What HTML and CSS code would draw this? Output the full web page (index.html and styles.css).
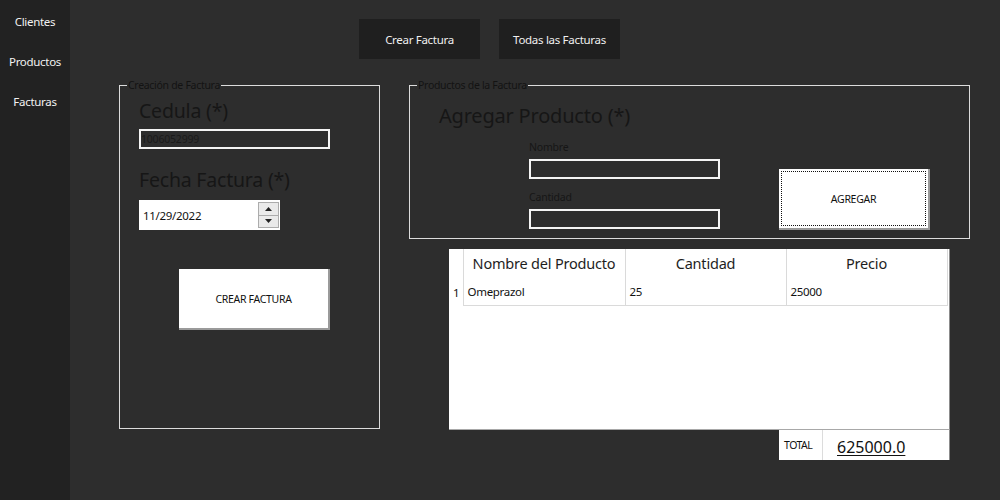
FILE: index.html
```html
<!DOCTYPE html>
<html lang="es">
<head>
<meta charset="utf-8">
<title>Facturas</title>
<link rel="stylesheet" href="styles.css">
</head>
<body>
<nav class="sidebar">
  <div class="nav-item">Clientes</div>
  <div class="nav-item">Productos</div>
  <div class="nav-item">Facturas</div>
</nav>
<main class="main">
  <div class="topbar">
    <button class="top-btn">Crear Factura</button>
    <button class="top-btn">Todas las Facturas</button>
  </div>
  <div class="content">
    <fieldset class="group group-left">
      <legend>Creación de Factura</legend>
      <div class="group-body left-body">
        <div class="big-label first">Cedula (*)</div>
        <div class="text-input cedula">1006052999</div>
        <div class="big-label second">Fecha Factura (*)</div>
        <div class="date-input">
          <span class="date-value">11/29/2022</span>
          <span class="spinner">
            <span class="spin up"><svg width="7" height="4" viewBox="0 0 7 4"><path d="M0 4 L3.5 0 L7 4 Z" fill="#222"/></svg></span>
            <span class="spin down"><svg width="7" height="4" viewBox="0 0 7 4"><path d="M0 0 L3.5 4 L7 0 Z" fill="#222"/></svg></span>
          </span>
        </div>
        <button class="white-btn crear">CREAR FACTURA</button>
      </div>
    </fieldset>
    <div class="right-col">
      <fieldset class="group group-right">
        <legend>Productos de la Factura</legend>
        <div class="group-body right-body">
          <div class="big-label agregar-title">Agregar Producto (*)</div>
          <div class="add-row">
            <div class="fields">
              <div class="small-label">Nombre</div>
              <div class="text-input field"></div>
              <div class="small-label second-label">Cantidad</div>
              <div class="text-input field"></div>
            </div>
            <button class="white-btn agregar"><span class="focus-ring">AGREGAR</span></button>
          </div>
        </div>
      </fieldset>
      <div class="grid-box">
        <table class="grid">
          <thead>
            <tr>
              <th class="rh"></th>
              <th class="c1">Nombre del Producto</th>
              <th class="c2">Cantidad</th>
              <th class="c3">Precio</th>
            </tr>
          </thead>
          <tbody>
            <tr>
              <td class="rh">1</td>
              <td>Omeprazol</td>
              <td>25</td>
              <td>25000</td>
            </tr>
          </tbody>
        </table>
      </div>
      <div class="total-box">
        <span class="total-label">TOTAL</span>
        <span class="total-value">625000.0</span>
      </div>
    </div>
  </div>
</main>
</body>
</html>
```

FILE: styles.css
```css
* { box-sizing: border-box; }
html, body { margin: 0; padding: 0; }
body {
  display: flex;
  width: 1000px;
  height: 500px;
  overflow: hidden;
  font-family: "Noto Sans", "Open Sans", sans-serif;
  background: #2d2d2d;
}
.sidebar {
  width: 70px;
  background: #222222;
  padding-top: 2px;
  flex-shrink: 0;
}
.nav-item {
  height: 40px;
  line-height: 40px;
  text-align: center;
  color: #f2f2f2;
  font-size: 11.5px;
  letter-spacing: -0.3px;
}
.main {
  flex: 1;
  background: #2d2d2d;
  padding-top: 19px;
}
.topbar {
  display: flex;
  gap: 19px;
  padding-left: 289px;
}
.top-btn {
  width: 121px;
  height: 40px;
  border: none;
  background: #1f1f1f;
  color: #f0f0f0;
  font-family: inherit;
  font-size: 11.5px;
  letter-spacing: -0.3px;
  padding: 0;
}
.content {
  display: flex;
  gap: 29px;
  padding-left: 49px;
  margin-top: 20px;
}
.group {
  margin: 0;
  padding: 0;
  border: 1px solid #dcdcdc;
  min-width: 0;
}
.group legend {
  margin-left: 7px;
  padding: 0 1px;
  color: #131313;
  font-size: 10.5px;
  line-height: 12px;
  letter-spacing: -0.3px;
}
.group-left {
  width: 261px;
  height: 350px;
}
.left-body { padding-left: 19px; }
.big-label {
  color: #161616;
  font-size: 19.5px;
  line-height: 24px;
  letter-spacing: -0.2px;
}
.big-label.first { margin-top: 8px; }
.big-label.second { margin-top: 19px; }
.text-input {
  border: 2px solid #f4f4f4;
  background: #2d2d2d;
  height: 20px;
  color: #1a1a1a;
  font-size: 10.5px;
  line-height: 16px;
  padding-left: 0;
  letter-spacing: -0.2px;
}
.cedula {
  width: 191px;
  margin-top: 6px;
}
.date-input {
  margin-top: 8px;
  width: 141px;
  height: 30px;
  background: #ffffff;
  display: flex;
  align-items: center;
  justify-content: space-between;
  padding: 0 1px 0 4px;
}
.date-value {
  font-size: 11.5px;
  color: #111;
  letter-spacing: -0.3px;
}
.spinner {
  display: flex;
  flex-direction: column;
  width: 21px;
  height: 26px;
}
.spin {
  flex: 1;
  display: flex;
  align-items: center;
  justify-content: center;
  background: #eaeaea;
  border: 1px solid #acacac;
}
.spin.down { border-top: none; }
.white-btn {
  background: #ffffff;
  border: none;
  border-right: 2px solid #9a9a9a;
  border-bottom: 2px solid #9a9a9a;
  color: #111;
  font-family: inherit;
  font-size: 10.5px;
  letter-spacing: -0.3px;
  padding: 0;
}
.crear {
  display: block;
  width: 151px;
  height: 61px;
  margin-top: 39px;
  margin-left: 40px;
}
.right-col {
  display: flex;
  flex-direction: column;
  width: 561px;
}
.group-right {
  width: 561px;
  height: 160px;
}
.right-body { padding-left: 29px; }
.agregar-title {
  margin-top: 13px;
  font-size: 20px;
}
.add-row {
  display: flex;
  align-items: flex-start;
  padding-left: 90px;
}
.fields {
  width: 191px;
}
.small-label {
  color: #161616;
  font-size: 10.5px;
  line-height: 14px;
  letter-spacing: -0.2px;
  margin-top: 12px;
  margin-bottom: 5px;
}
.second-label { margin-top: 11px; }
.field { width: 191px; }
.agregar {
  width: 151px;
  height: 61px;
  margin-left: 59px;
  margin-top: 41px;
  padding: 2px;
}
.focus-ring {
  display: flex;
  align-items: center;
  justify-content: center;
  height: 100%;
  border: 1px dotted #111;
}
.grid-box {
  margin-top: 10px;
  margin-left: 40px;
  width: 501px;
  height: 181px;
  background: #ffffff;
  border-right: 1px solid #8c8c8c;
  border-bottom: 1px solid #a8a8a8;
}
.grid {
  border-collapse: collapse;
  table-layout: fixed;
  width: 498px;
}
.grid th {
  height: 30px;
  font-weight: normal;
  font-size: 14.5px;
  color: #1e1e1e;
  text-align: center;
  border-right: 1px solid #dadada;
  padding: 0 0 2px 0;
  letter-spacing: -0.2px;
}
.grid td {
  height: 26px;
  font-size: 11.5px;
  color: #111;
  padding: 0 0 0 4px;
  border-right: 1px solid #dadada;
  border-bottom: 1px solid #dadada;
  letter-spacing: -0.3px;
}
.grid .rh { width: 14px; }
.grid td.rh { border-bottom: none; padding-left: 4px; }
.grid .c1 { width: 162px; }
.grid .c2 { width: 161px; }
.grid .c3 { width: 161px; }
.total-box {
  margin-left: 370px;
  width: 171px;
  height: 30px;
  background: #ffffff;
  border-right: 1px solid #8c8c8c;
  display: flex;
  align-items: center;
}
.total-label {
  width: 44px;
  height: 100%;
  display: flex;
  align-items: center;
  padding-left: 5px;
  border-right: 1px solid #dcdcdc;
  font-size: 10.5px;
  color: #111;
  letter-spacing: -0.5px;
}
.total-value {
  margin-left: 14px;
  margin-top: 3px;
  font-size: 16px;
  color: #111;
  text-decoration: underline;
  text-underline-offset: 2px;
}
```
